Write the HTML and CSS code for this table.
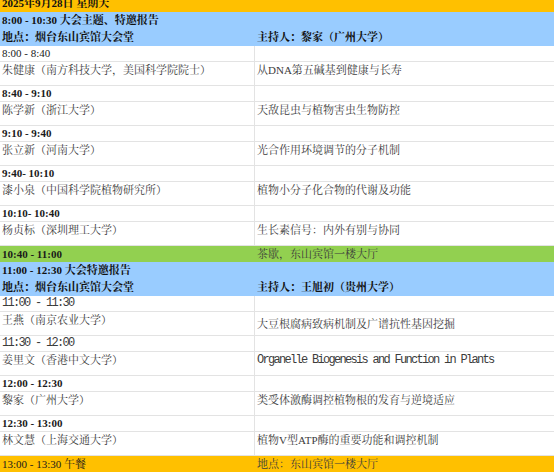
FILE: index.html
```html
<!DOCTYPE html>
<html lang="zh">
<head>
<meta charset="utf-8">
<title>日程</title>
<link rel="stylesheet" href="styles.css">
</head>
<body>
<div class="sheet">
  <div class="band date"><div class="clip b">2025年9月28日 星期天</div></div>

  <div class="band blue">
    <div class="line b">8:00 - 10:30 大会主题、特邀报告</div>
    <div class="line split b"><span>地点：烟台东山宾馆大会堂</span><span>主持人：黎家（广州大学）</span></div>
  </div>

  <div class="row time"><div class="c1 t">8:00 - 8:40</div><div class="c2"></div></div>
  <div class="row talk"><div class="c1">朱健康（南方科技大学，美国科学院院士）</div><div class="c2">从DNA第五碱基到健康与长寿</div></div>
  <div class="row time"><div class="c1 t b">8:40 - 9:10</div><div class="c2"></div></div>
  <div class="row talk"><div class="c1">陈学新（浙江大学）</div><div class="c2">天敌昆虫与植物害虫生物防控</div></div>
  <div class="row time"><div class="c1 t b">9:10 - 9:40</div><div class="c2"></div></div>
  <div class="row talk"><div class="c1">张立新（河南大学）</div><div class="c2">光合作用环境调节的分子机制</div></div>
  <div class="row time"><div class="c1 t b">9:40- 10:10</div><div class="c2"></div></div>
  <div class="row talk"><div class="c1">漆小泉（中国科学院植物研究所）</div><div class="c2">植物小分子化合物的代谢及功能</div></div>
  <div class="row time"><div class="c1 t b">10:10- 10:40</div><div class="c2"></div></div>
  <div class="row talk"><div class="c1">杨贞标（深圳理工大学）</div><div class="c2">生长素信号：内外有别与协同</div></div>

  <div class="band green split"><span class="b t">10:40 - 11:00</span><span>茶歇，东山宾馆一楼大厅</span></div>

  <div class="band blue">
    <div class="line b">11:00 - 12:30 大会特邀报告</div>
    <div class="line split b"><span>地点：烟台东山宾馆大会堂</span><span>主持人：王旭初（贵州大学）</span></div>
  </div>

  <div class="row time"><div class="c1 mono">11:00 - 11:30</div><div class="c2"></div></div>
  <div class="row talk"><div class="c1">王燕（南京农业大学）</div><div class="c2 low">大豆根腐病致病机制及广谱抗性基因挖掘</div></div>
  <div class="row time"><div class="c1 mono">11:30 - 12:00</div><div class="c2"></div></div>
  <div class="row talk"><div class="c1">姜里文（香港中文大学）</div><div class="c2 mono">Organelle Biogenesis and Function in Plants</div></div>
  <div class="row time"><div class="c1 t b">12:00 - 12:30</div><div class="c2"></div></div>
  <div class="row talk"><div class="c1">黎家（广州大学）</div><div class="c2">类受体激酶调控植物根的发育与逆境适应</div></div>
  <div class="row time"><div class="c1 t b">12:30 - 13:00</div><div class="c2"></div></div>
  <div class="row talk"><div class="c1">林文慧（上海交通大学）</div><div class="c2">植物V型ATP酶的重要功能和调控机制</div></div>

  <div class="band yellow split"><span class="t">13:00 - 13:30 午餐</span><span>地点：东山宾馆一楼大厅</span></div>
</div>
</body>
</html>
```

FILE: styles.css
```css
html, body {
  margin: 0;
  padding: 0;
  background: #ffffff;
}

body {
  font-family: "Liberation Serif", "Noto Serif CJK SC", "Noto Sans CJK SC", serif;
  font-size: 11px;
  color: #3c3c3c;
}

.sheet {
  width: 554px;
  display: flex;
  flex-direction: column;
}

.b {
  font-weight: bold;
  color: #111;
}

.t {
  color: #1a1a1a;
}

.mono {
  font-family: "Liberation Mono", "Noto Sans CJK SC", monospace;
  font-size: 12px;
  letter-spacing: -1.7px;
}

.band {
  box-sizing: border-box;
  padding-left: 2px;
}

.date {
  height: 12px;
  overflow: hidden;
  background: #ffc000;
}

.date .clip {
  line-height: 12px;
  margin-top: -3px;
}

.blue {
  height: 34px;
  background: #99ccff;
  display: flex;
  flex-direction: column;
}

.blue .line {
  height: 17px;
  line-height: 17px;
}

.split {
  display: grid;
  grid-template-columns: 255px 1fr;
}

.green {
  height: 16px;
  line-height: 16px;
  background: #92d050;
}

.yellow {
  height: 16px;
  line-height: 16px;
  background: #ffc000;
}

.row {
  display: grid;
  grid-template-columns: 255px 1fr;
  box-sizing: border-box;
  border-bottom: 1px solid #e3e3e3;
}

.c1 {
  border-right: 1px solid #e3e3e3;
  padding-left: 2px;
  white-space: nowrap;
}

.c2 {
  padding-left: 2px;
  white-space: nowrap;
}

.time {
  height: 16px;
  line-height: 15px;
}

.talk {
  height: 24px;
  line-height: 16px;
}

.c2.low {
  padding-top: 4px;
}
```
